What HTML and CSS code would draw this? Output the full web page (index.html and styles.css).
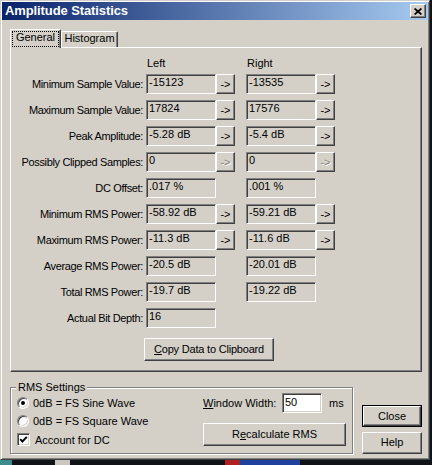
FILE: index.html
```html
<!DOCTYPE html>
<html>
<head>
<meta charset="utf-8">
<link rel="stylesheet" href="styles.css">
</head>
<body>
<div class="win">
  <div class="titlebar">
    <span class="title">Amplitude Statistics</span>
    <span class="xbtn"><svg width="8" height="7" viewBox="0 0 8 7"><path d="M0.6 0.5L7.4 6.5M7.4 0.5L0.6 6.5" stroke="#000" stroke-width="1.7" fill="none"/></svg></span>
  </div>
  <div class="client">
    <div class="tabs">
      <div class="tab sel"><span class="focus">General</span></div>
      <div class="tab hist">Histogram</div>
    </div>
    <div class="panel">
      <div class="hdr"><span class="c2 htxt">Left</span><span class="c4 htxt">Right</span></div>
      <div class="grid">
        <div class="lbl">Minimum Sample Value:</div><div class="box c2">-15123</div><div class="btn c3">-&gt;</div><div class="box c4">-13535</div><div class="btn c5">-&gt;</div>
        <div class="lbl">Maximum Sample Value:</div><div class="box c2">17824</div><div class="btn c3">-&gt;</div><div class="box c4">17576</div><div class="btn c5">-&gt;</div>
        <div class="lbl">Peak Amplitude:</div><div class="box c2">-5.28 dB</div><div class="btn c3">-&gt;</div><div class="box c4">-5.4 dB</div><div class="btn c5">-&gt;</div>
        <div class="lbl">Possibly Clipped Samples:</div><div class="box c2">0</div><div class="btn c3 dis">-&gt;</div><div class="box c4">0</div><div class="btn c5 dis">-&gt;</div>
        <div class="lbl">DC Offset:</div><div class="box c2">.017 %</div><div class="box c4">.001 %</div>
        <div class="lbl">Minimum RMS Power:</div><div class="box c2">-58.92 dB</div><div class="btn c3">-&gt;</div><div class="box c4">-59.21 dB</div><div class="btn c5">-&gt;</div>
        <div class="lbl">Maximum RMS Power:</div><div class="box c2">-11.3 dB</div><div class="btn c3">-&gt;</div><div class="box c4">-11.6 dB</div><div class="btn c5">-&gt;</div>
        <div class="lbl">Average RMS Power:</div><div class="box c2">-20.5 dB</div><div class="box c4">-20.01 dB</div>
        <div class="lbl">Total RMS Power:</div><div class="box c2">-19.7 dB</div><div class="box c4">-19.22 dB</div>
        <div class="lbl">Actual Bit Depth:</div><div class="box c2">16</div>
      </div>
      <div class="pbtn copy"><u>C</u>opy Data to Clipboard</div>
    </div>
    <div class="bottom">
      <div class="group">
        <div class="legend">RMS Settings</div>
        <div class="gbody">
          <div class="opts">
            <div class="opt r1"><span class="radio on"></span>0dB = FS Sine Wave</div>
            <div class="opt r2"><span class="radio"></span>0dB = FS Square Wave</div>
            <div class="opt r3"><span class="check"><svg width="9" height="9" viewBox="0 0 9 9"><path d="M1.2 4.2L3.4 6.5L7.8 1.8" stroke="#000" stroke-width="1.9" fill="none"/></svg></span>Account for DC</div>
          </div>
          <div class="rcol">
            <div class="wrow"><span class="wl"><u>W</u>indow Width:</span><span class="wedit">50</span><span class="ms">ms</span></div>
            <div class="pbtn recalc">R<u>e</u>calculate RMS</div>
          </div>
        </div>
      </div>
      <div class="side">
        <div class="defbtn"><div class="pbtn inner">Close</div></div>
        <div class="pbtn help">Help</div>
      </div>
    </div>
  </div>
</div>
</body>
</html>
```
FILE: styles.css
```css
* { box-sizing: border-box; }
html, body { margin: 0; padding: 0; }
body {
  width: 432px;
  height: 465px;
  overflow: hidden;
  background: linear-gradient(to right, #3b8c8c 0, #3b8c8c 12px, #101418 12px, #101418 55px, #c8c8c0 55px, #c8c8c0 70px, #101418 70px, #101418 225px, #b02020 225px, #b02020 240px, #2040a0 240px, #2040a0 300px, #101418 300px);
  font: 11px "Liberation Sans", Arial, sans-serif;
  color: #000;
}
.win {
  width: 430px;
  height: 460px;
  background: #d4d0c8;
  border: 1px solid;
  border-color: #d4d0c8 #404040 #404040 #d4d0c8;
  box-shadow: inset 1px 1px #fff, inset -1px -1px #808080;
  padding: 1px;
  display: flex;
  flex-direction: column;
}
.titlebar {
  height: 18px;
  flex: none;
  display: flex;
  align-items: center;
  padding-left: 3px;
  background: linear-gradient(to right, #0a246a, #a6caf0);
  color: #fff;
  font: bold 13px "Liberation Sans", Arial, sans-serif;
}
.title { line-height: 18px; letter-spacing: -0.1px; }
.xbtn {
  margin-left: auto;
  margin-right: 2px;
  width: 16px;
  height: 14px;
  background: #d4d0c8;
  border: 1px solid;
  border-color: #fff #404040 #404040 #fff;
  box-shadow: inset -1px -1px #808080;
  display: flex;
  align-items: center;
  justify-content: center;
}
.client {
  flex: 1;
  padding: 9px 0 0 8px;
}
.tabs {
  display: flex;
  align-items: flex-end;
  height: 18px;
  position: relative;
  z-index: 1;
}
.tab {
  border-top: 1px solid #fff;
  border-left: 1px solid #fff;
  border-right: 1px solid #404040;
  box-shadow: inset -1px 0 #808080;
  border-radius: 2px 2px 0 0;
  background: #d4d0c8;
  text-align: center;
}
.tab.sel {
  width: 51px;
  height: 19px;
  margin-bottom: -1px;
  padding: 1px 1px 0 1px;
}
.focus {
  display: block;
  height: 16px;
  border: 1px dotted #000;
  line-height: 11px;
}
.tab.hist {
  width: 57px;
  height: 16px;
  line-height: 13px;
}
.panel {
  width: 412px;
  height: 325px;
  border-top: 1px solid #fff;
  border-left: 1px solid #fff;
  border-right: 1px solid #404040;
  border-bottom: 1px solid #404040;
  box-shadow: inset -1px -1px #808080;
  padding-top: 8px;
}
.hdr, .grid {
  display: grid;
  grid-template-columns: 135px 70px 30px 70px 19px;
}
.hdr {
  height: 14px;
  line-height: 14px;
  margin-bottom: 4px;
}
.htxt { padding-left: 1px; }
.grid {
  grid-auto-rows: 20px;
  row-gap: 6px;
}
.lbl {
  grid-column: 1;
  text-align: right;
  padding: 1px 3px 0 0;
  line-height: 19px;
  white-space: nowrap;
  letter-spacing: -0.35px;
}
.c2 { grid-column: 2; }
.c3 { grid-column: 3; }
.c4 { grid-column: 4; }
.c5 { grid-column: 5; }
.box {
  height: 20px;
  border: 1px solid;
  border-color: #808080 #fff #fff #808080;
  box-shadow: inset 1px 1px #404040, inset -1px -1px #d4d0c8;
  padding: 0 2px;
  line-height: 14px;
  white-space: nowrap;
  overflow: hidden;
}
.btn {
  width: 19px;
  height: 20px;
  border: 1px solid;
  border-color: #fff #404040 #404040 #fff;
  box-shadow: inset -1px -1px #808080;
  text-align: center;
  line-height: 18px;
}
.btn.dis {
  color: #808080;
  text-shadow: 1px 1px #fff;
}
.pbtn {
  border: 1px solid;
  border-color: #fff #404040 #404040 #fff;
  box-shadow: inset -1px -1px #808080, inset 1px 1px #d4d0c8;
  background: #d4d0c8;
  text-align: center;
  white-space: nowrap;
}
.copy {
  width: 130px;
  height: 23px;
  line-height: 20px;
  margin: 10px 0 0 133px;
  letter-spacing: -0.2px;
}
.bottom {
  display: flex;
  margin-top: 15px;
}
.group {
  width: 343px;
  height: 67px;
  border: 1px solid #808080;
  box-shadow: inset 1px 1px #fff, 1px 1px #fff;
}
.legend {
  width: max-content;
  margin: -7px 0 0 5px;
  padding: 0 2px;
  background: #d4d0c8;
  line-height: 13px;
}
.gbody {
  display: flex;
}
.opts {
  padding-left: 6px;
}
.opt {
  display: flex;
  align-items: center;
  height: 18px;
  white-space: nowrap;
}
.opt.r3 { height: 19px; }
.radio {
  width: 12px;
  height: 12px;
  margin-right: 4px;
  border-radius: 50%;
  background: #fff;
  border: 1px solid;
  border-color: #808080 #fff #fff #808080;
  box-shadow: inset 1px 1px #404040, inset -1px -1px #d4d0c8;
  display: flex;
  align-items: center;
  justify-content: center;
}
.radio.on::after {
  content: "";
  width: 4px;
  height: 4px;
  border-radius: 50%;
  background: #000;
}
.check {
  width: 13px;
  height: 13px;
  margin-right: 5px;
  background: #fff;
  border: 1px solid;
  border-color: #808080 #fff #fff #808080;
  box-shadow: inset 1px 1px #404040, inset -1px -1px #d4d0c8;
  display: flex;
  align-items: center;
  justify-content: center;
}
.rcol {
  margin-left: auto;
  margin-right: 6px;
  margin-top: -1px;
  width: 143px;
}
.wrow {
  display: flex;
  align-items: center;
  height: 20px;
}
.wl { width: 79px; white-space: nowrap; }
.wedit {
  width: 40px;
  height: 20px;
  background: #fff;
  border: 1px solid;
  border-color: #808080 #fff #fff #808080;
  box-shadow: inset 1px 1px #404040, inset -1px -1px #d4d0c8;
  padding: 0 2px;
  line-height: 16px;
}
.ms { margin-left: 7px; }
.recalc {
  margin-top: 10px;
  height: 23px;
  line-height: 20px;
}
.side {
  width: 60px;
  margin-left: 9px;
  margin-top: 18px;
}
.defbtn {
  height: 22px;
  border: 1px solid #000;
}
.defbtn .inner {
  height: 20px;
  line-height: 18px;
}
.help {
  margin-top: 5px;
  height: 22px;
  line-height: 19px;
}
```
